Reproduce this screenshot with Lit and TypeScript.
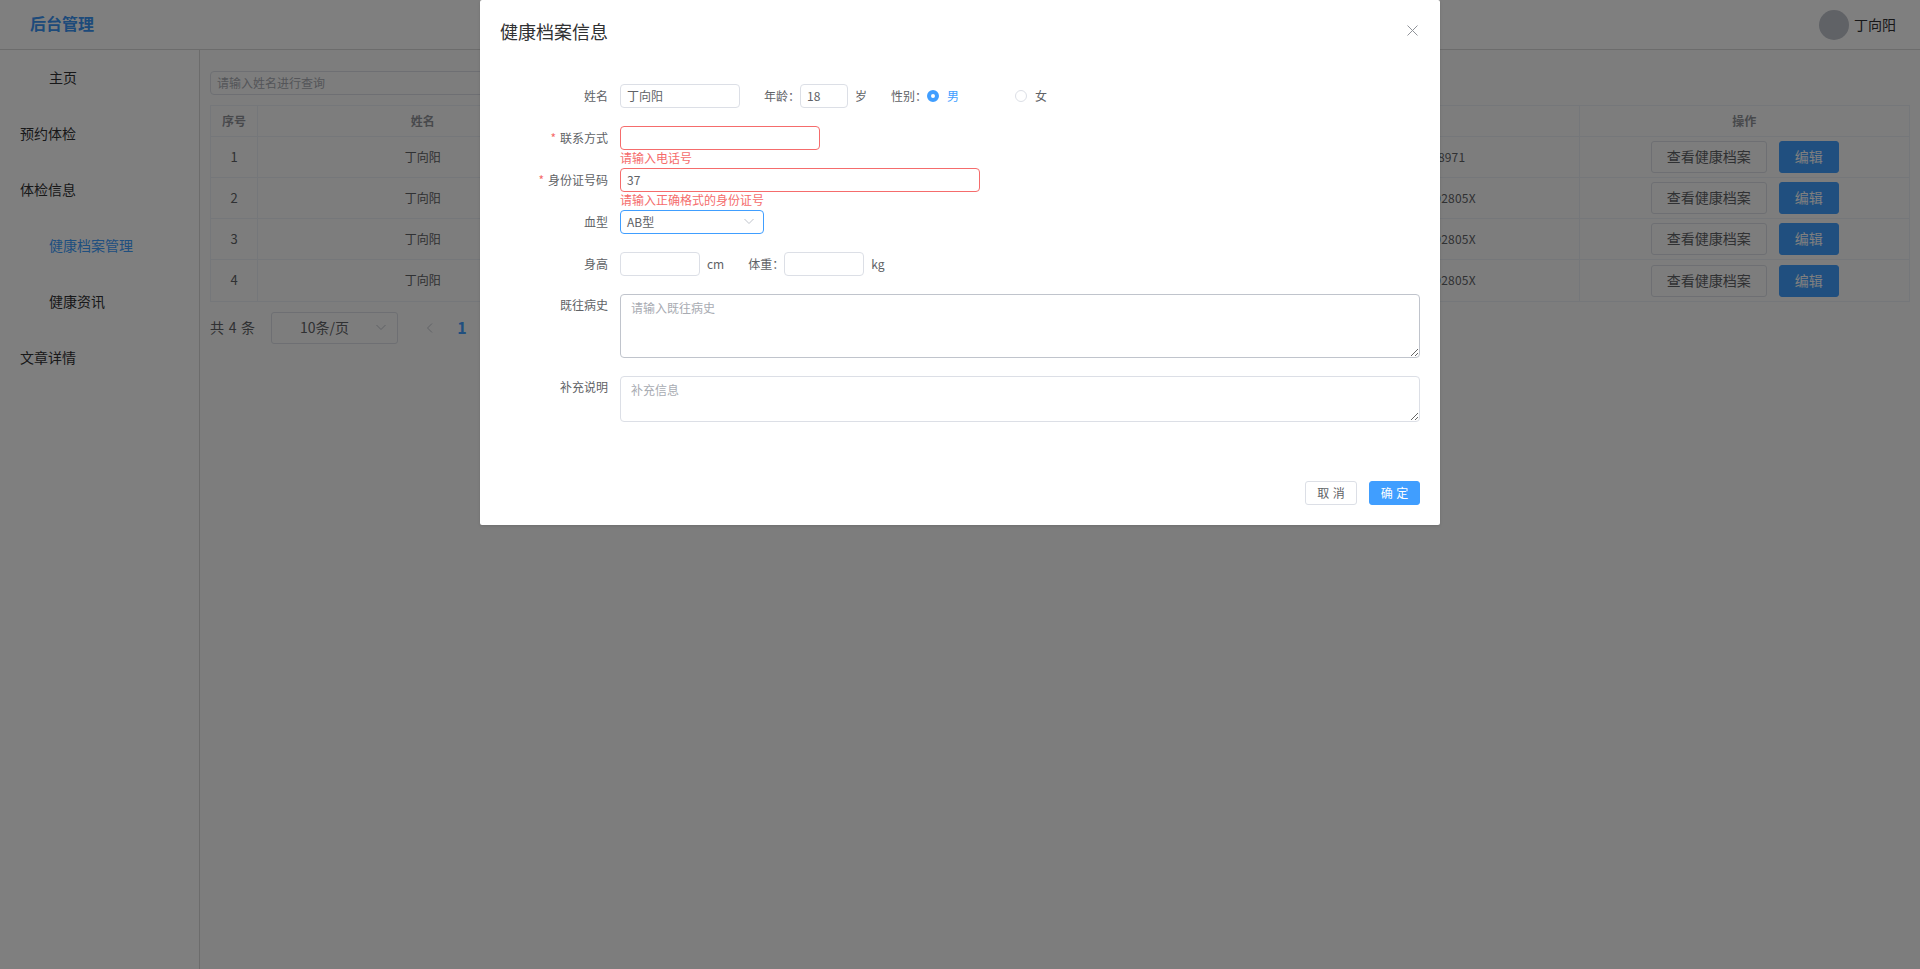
import { LitElement, html, css } from "lit";
import { customElement } from "lit/decorators.js";

const ROWS = [
  { no: 1, name: "丁向阳", age: 18, phone: "15900000000", id: "370000000008971" },
  { no: 2, name: "丁向阳", age: 18, phone: "15900000000", id: "37000020000102805X" },
  { no: 3, name: "丁向阳", age: 18, phone: "15900000000", id: "37000020000102805X" },
  { no: 4, name: "丁向阳", age: 18, phone: "15900000000", id: "37000020000102805X" },
];

const chevron = html`<svg class="chev" width="12" height="12" viewBox="0 0 12 12" fill="none" stroke="currentColor" stroke-width="1"><path d="M1.5 4l4.5 4.5L10.5 4"/></svg>`;

@customElement("app-root")
export class AppRoot extends LitElement {
  static styles = css`
    :host {
      display: block;
      height: 969px;
      overflow: hidden;
      position: relative;
      background: #fff;
      font-family: "Noto Sans CJK SC", "Noto Sans", sans-serif;
      font-size: 12px;
      color: #606266;
    }
    * { box-sizing: border-box; }
    .header {
      height: 50px;
      border-bottom: 1px solid #d8d8d8;
      display: flex;
      align-items: center;
      justify-content: space-between;
      padding: 0 24px 0 30px;
    }
    .logo { font-size: 16px; font-weight: 700; color: #3a95f5; padding-bottom: 3px; }
    .user { display: flex; align-items: center; gap: 5px; font-size: 14px; color: #303133; }
    .user .nm { padding-bottom: 2px; }
    .avatar { width: 30px; height: 30px; border-radius: 50%; background: #c0c4cc; }
    .main { display: flex; height: 919px; }
    .side { width: 200px; border-right: 1px solid #d8d8d8; flex: none; }
    .mi { height: 56px; display: flex; align-items: center; padding: 0 0 2px 20px; font-size: 14px; color: #303133; }
    .mi.sub { padding-left: 49px; }
    .mi.active { color: #409eff; }
    .content { flex: 1; min-width: 0; padding: 21px 10px 0 10px; background: #fbfbfb; }
    .search {
      display: block;
      width: 300px; height: 24px;
      border: 1px solid #dcdfe6; border-radius: 4px;
      padding: 0 6px 2px;
      font: inherit; font-size: 12px; outline: none;
      background: transparent;
    }
    input::placeholder, textarea::placeholder { color: #a8abb2; opacity: 1; }
    .table {
      margin-top: 10px;
      display: grid;
      grid-template-columns: 47px repeat(5, 1fr);
      grid-auto-rows: 41.17px;
      grid-template-rows: 31px;
      border-top: 1px solid #ebeef5;
      border-left: 1px solid #ebeef5;
      width: 1700px;
    }
    .c {
      display: flex; align-items: center; justify-content: center; gap: 12px;
      border-right: 1px solid #ebeef5;
      border-bottom: 1px solid #ebeef5;
      white-space: nowrap;
      min-width: 0;
      padding-bottom: 2px;
    }
    .c.h { font-weight: 700; color: #909399; }
    .c.ops { padding: 0 0 0 1px; }
    .c.idc { letter-spacing: 0.2px; }
    .c.num { font-size: 13px; }
    .btn {
      height: 32px; border-radius: 3px; font-size: 14px;
      display: inline-flex; align-items: center; justify-content: center;
      font-family: inherit; padding: 0 0 2px;
    }
    .btn.view { width: 116px; background: transparent; border: 1px solid #dcdfe6; color: #606266; }
    .btn.edit { width: 60px; background: #409eff; border: 1px solid #409eff; color: #fff; }
    .pager { display: flex; align-items: center; margin-top: 10px; height: 32px; font-size: 14px; color: #606266; }
    .total { width: 61px; white-space: pre; word-spacing: 1.5px; padding-bottom: 2px; }
    .size {
      width: 127px; height: 32px; border: 1px solid #dcdfe6; border-radius: 3px;
      display: flex; align-items: center; justify-content: space-between;
      padding: 0 10px 2px 28px; font-size: 14px; color: #606266;
    }
    .chev { color: #c0c4cc; flex: none; }
    .prev { width: 32px; margin-left: 16px; display: flex; justify-content: center; color: #c0c4cc; }
    .prev svg { transform: rotate(90deg); }
    .page { width: 32px; text-align: center; font-size: 16px; font-weight: 700; color: #409eff; padding-bottom: 2px; }

    .mask { position: absolute; inset: 0; background: rgba(0, 0, 0, 0.5); }
    .dialog {
      position: absolute; left: 480px; top: 0; width: 960px; height: 525px;
      background: #fff; border-radius: 2px;
      box-shadow: 0 1px 3px rgba(0, 0, 0, 0.12);
      padding: 20px;
    }
    .title { font-size: 18px; line-height: 22px; color: #303133; margin-bottom: 42px; }
    .close { position: absolute; right: 22px; top: 25px; color: #909399; display: block; }
    .row { display: flex; align-items: center; margin-bottom: 18px; height: 24px; position: relative; }
    .row.top { align-items: flex-start; height: auto; }
    .lab { width: 108px; margin-right: 12px; text-align: right; flex: none; color: #606266; line-height: 22px; }
    .star { color: #f56c6c; margin-right: 4px; }
    .inp {
      height: 24px; border: 1px solid #dcdfe6; border-radius: 4px;
      padding: 0 6px 2px; font: inherit; font-size: 12px; color: #606266; outline: none; background: #fff; display: block;
    }
    .w120 { width: 120px; } .w48 { width: 48px; } .w80 { width: 80px; }
    .w200 { width: 200px; } .w360 { width: 360px; }
    .bad { border-color: #f56c6c; }
    .err { position: absolute; left: 120px; top: 24px; color: #f56c6c; line-height: 16px; white-space: nowrap; }
    .lbl { margin-left: 24px; white-space: nowrap; padding-bottom: 2px; }
    .unit { margin-left: 7px; white-space: nowrap; padding-bottom: 2px; }
    .select {
      width: 144px; height: 24px; border: 1px solid #409eff; border-radius: 4px;
      display: flex; align-items: center; justify-content: space-between;
      padding: 0 8px 2px 6px; color: #606266;
    }
    .radio { display: flex; align-items: center; gap: 8px; width: 88px; flex: none; }
    .radio span:last-child { padding-bottom: 2px; }
    .dot { width: 12px; height: 12px; border-radius: 50%; border: 1px solid #dcdfe6; background: #fff; flex: none; }
    .radio.on { color: #409eff; }
    .radio.on .dot { border: 4px solid #409eff; }
    textarea {
      display: block; width: 800px; border: 1px solid #dcdfe6; border-radius: 4px;
      padding: 4px 10px; font: inherit; font-size: 12px; line-height: 18px; color: #606266;
      outline: none; background: #fff; resize: vertical;
    }
    .h64 { height: 64px; border-color: #c0c4cc; }
    .h46 { height: 46px; }
    .foot { display: flex; justify-content: flex-end; gap: 12px; padding-top: 41px; }
    .fb {
      height: 24px; border-radius: 3px; font: inherit; font-size: 12px; padding: 0 0 2px;
      display: inline-flex; align-items: center; justify-content: center; white-space: pre; word-spacing: 1px;
    }
    .cancel { width: 52px; background: #fff; border: 1px solid #dcdfe6; color: #606266; }
    .ok { width: 51px; background: #409eff; border: 1px solid #409eff; color: #fff; }
  `;

  render() {
    return html`
      <div class="header">
        <div class="logo">后台管理</div>
        <div class="user"><span class="avatar"></span><span class="nm">丁向阳</span></div>
      </div>
      <div class="main">
        <nav class="side">
          <div class="mi sub">主页</div>
          <div class="mi">预约体检</div>
          <div class="mi">体检信息</div>
          <div class="mi sub active">健康档案管理</div>
          <div class="mi sub">健康资讯</div>
          <div class="mi">文章详情</div>
        </nav>
        <section class="content">
          <input class="search" placeholder="请输入姓名进行查询" />
          <div class="table">
            ${["序号", "姓名", "年龄", "联系方式", "身份证号", "操作"].map((h) => html`<div class="c h">${h}</div>`)}
            ${ROWS.map(
              (r) => html`
                <div class="c num">${r.no}</div>
                <div class="c">${r.name}</div>
                <div class="c">${r.age}</div>
                <div class="c">${r.phone}</div>
                <div class="c idc">${r.id}</div>
                <div class="c ops"><button class="btn view">查看健康档案</button><button class="btn edit">编辑</button></div>
              `
            )}
          </div>
          <div class="pager">
            <span class="total">共 4 条</span>
            <div class="size"><span>10条/页</span>${chevron}</div>
            <div class="prev">${chevron}</div>
            <div class="page">1</div>
          </div>
        </section>
      </div>

      <div class="mask"></div>
      <div class="dialog">
        <div class="title">健康档案信息</div>
        <svg class="close" width="11" height="11" viewBox="0 0 11 11" stroke="currentColor" stroke-width="1" fill="none"><path d="M.5.5l10 10M10.5.5l-10 10"/></svg>

        <div class="row">
          <div class="lab">姓名</div>
          <input class="inp w120" .value=${"丁向阳"} />
          <span class="lbl">年龄：</span>
          <input class="inp w48" .value=${"18"} />
          <span class="unit">岁</span>
          <span class="lbl">性别：</span>
          <label class="radio on"><span class="dot"></span><span>男</span></label>
          <label class="radio"><span class="dot"></span><span>女</span></label>
        </div>
        <div class="row">
          <div class="lab"><span class="star">*</span>联系方式</div>
          <input class="inp w200 bad" />
          <div class="err">请输入电话号</div>
        </div>
        <div class="row">
          <div class="lab"><span class="star">*</span>身份证号码</div>
          <input class="inp w360 bad" .value=${"37"} />
          <div class="err">请输入正确格式的身份证号</div>
        </div>
        <div class="row">
          <div class="lab">血型</div>
          <div class="select"><span>AB型</span>${chevron}</div>
        </div>
        <div class="row">
          <div class="lab">身高</div>
          <input class="inp w80" />
          <span class="unit">cm</span>
          <span class="lbl">体重：</span>
          <input class="inp w80" />
          <span class="unit">kg</span>
        </div>
        <div class="row top">
          <div class="lab">既往病史</div>
          <textarea class="h64" placeholder="请输入既往病史"></textarea>
        </div>
        <div class="row top">
          <div class="lab">补充说明</div>
          <textarea class="h46" placeholder="补充信息"></textarea>
        </div>
        <div class="foot">
          <button class="fb cancel">取 消</button>
          <button class="fb ok">确 定</button>
        </div>
      </div>
    `;
  }
}
